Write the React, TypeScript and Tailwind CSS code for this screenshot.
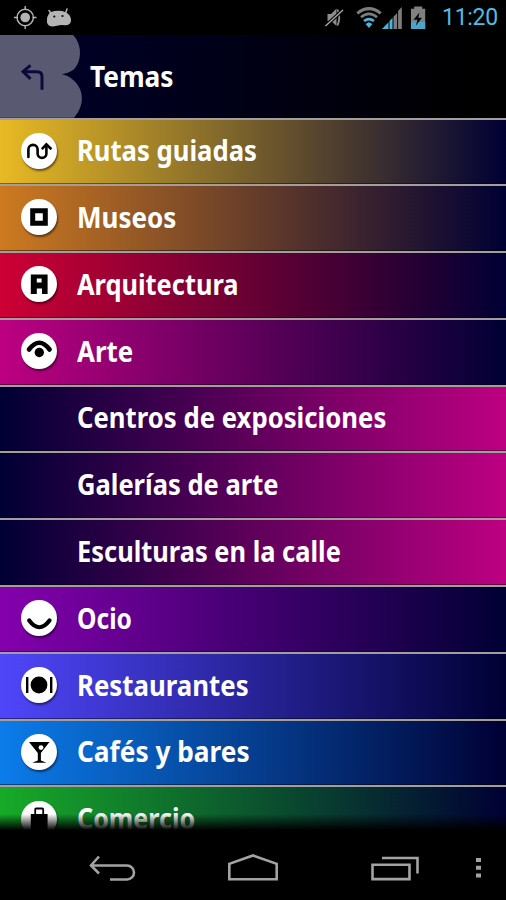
import { useLayoutEffect, useRef, useState } from "react";
import type { ReactNode } from "react";

/* Condenses a label horizontally so that it occupies the given width. */
function Label({ text, width }: { text: string; width: number }) {
  const ref = useRef<HTMLSpanElement>(null);
  const [scale, setScale] = useState(1);
  useLayoutEffect(() => {
    if (ref.current) setScale((width + 1.5) / ref.current.offsetWidth);
  }, [width]);
  return (
    <span
      ref={ref}
      className="block origin-left whitespace-nowrap text-[28px] leading-9 font-bold text-white"
      style={{ transform: `scaleX(${scale})` }}
    >
      {text}
    </span>
  );
}

const icons: Record<string, ReactNode> = {
  route: (
    <g fill="none" stroke="#000" strokeWidth="2.6">
      <path d="M7.4 24V16.5a4.6 4.6 0 0 1 9.2 0v4a4.4 4.4 0 0 0 8.8 0V12.2" strokeLinecap="round" />
      <path d="m20.8 16.2 4.6-4.8 5 4.8" />
    </g>
  ),
  museum: <path d="M11.7 11.7h12.6v12.6H11.7z" fill="none" stroke="#000" strokeWidth="5" />,
  architecture: (
    <path fillRule="evenodd" d="M9.800 8.500h16.800v19.500h-5.600V22.500h-5.200V28H9.800zM15.800 12.600v4h4.800v-4z" />
  ),
  art: (
    <>
      <path d="M8 16.500Q18.300 3 28.600 16.500" fill="none" stroke="#000" strokeWidth="4.600" strokeLinecap="round" />
      <circle cx="18.300" cy="19.500" r="4.700" />
    </>
  ),
  smile: <path d="M8.200 20.500Q18.300 34 28.500 20.500" fill="none" stroke="#000" strokeWidth="4.200" strokeLinecap="round" />,
  plate: (
    <>
      <circle cx="18" cy="18" r="8.400" />
      <path d="M5 10h2.400v16H5zM29 10h2.400v16H29z" />
    </>
  ),
  glass: (
    <>
      <path d="M8 8h20.500l-8.600 11v7.500l5.600 2.200H11.200l5.600-2.200V19z" />
      <circle cx="20" cy="13.600" r="2.400" fill="#fff" />
    </>
  ),
  bag: (
    <>
      <path d="M9.800 13h16.800v20H9.800z" />
      <path d="M14.200 14V8.500q0-1 1-1h6q1 0 1 1V14" fill="none" stroke="#000" strokeWidth="1.800" />
    </>
  ),
};

type Row = { label: string; width: number; bg: string; icon?: string };

const rows: Row[] = [
  { label: "Rutas guiadas", width: 178, icon: "route", bg: "from-[#e8ba24] to-[#000034]" },
  { label: "Museos", width: 98, icon: "museum", bg: "from-[#cd7a20] to-[#000034]" },
  { label: "Arquitectura", width: 160, icon: "architecture", bg: "from-[#cd0034] to-[#000034]" },
  { label: "Arte", width: 55, icon: "art", bg: "from-[#bd0082] to-[#000034]" },
  { label: "Centros de exposiciones", width: 308, bg: "from-[#000034] to-[#bd0082]" },
  { label: "Galerías de arte", width: 200, bg: "from-[#000034] to-[#bd0082]" },
  { label: "Esculturas en la calle", width: 262, bg: "from-[#000034] to-[#bd0082]" },
  { label: "Ocio", width: 53, icon: "smile", bg: "from-[#8400ad] to-[#000034]" },
  { label: "Restaurantes", width: 170, icon: "plate", bg: "from-[#4f46fa] to-[#000034]" },
  { label: "Cafés y bares", width: 171, icon: "glass", bg: "from-[#0b7cea] to-[#000034]" },
  { label: "Comercio", width: 117, icon: "bag", bg: "from-[#17aa28] to-[#000034]" },
];

function StatusBar() {
  return (
    <div className="flex h-[35px] shrink-0 items-center bg-black">
      <svg className="h-[35px] w-[430px] shrink-0" viewBox="0 0 430 35">
        <g stroke="#b4b4b4" fill="none" strokeWidth="1.400">
          <circle cx="25.200" cy="17.500" r="8.200" />
          <path d="M25.200 6v4M25.200 25v4M14 17.500h4M32.500 17.500h4" />
        </g>
        <circle cx="25.200" cy="17.500" r="4.800" fill="#b4b4b4" />
        <path
          d="M50.200 12.200Q59 9.500 65.500 12.200 71 14.500 71 20.500 70.500 25.500 65 25.300 61 24.500 57 25.700 48.500 28 47 22.500 46.300 16 50.200 12.200z"
          fill="#b4b4b4"
        />
        <path d="m49 10.500 2.500 3.500M67 9l-1.500 4.500" stroke="#b4b4b4" strokeWidth="1.500" strokeLinecap="round" />
        <circle cx="54.300" cy="16.500" r="1.100" />
        <circle cx="62.500" cy="16" r="1.100" />
        <g fill="#8c8c8c">
          <path d="M327.500 14h3.500l5.500-5.500v17.500l-5-4.700h-4z" />
          <path d="M337.500 9.500q3.500 8 0 16" fill="none" stroke="#8c8c8c" strokeWidth="1.800" />
          <path d="m325.500 26 17.500-16" stroke="#000" strokeWidth="3.500" />
          <path d="m325.500 26 17.500-16" stroke="#a8a8a8" strokeWidth="1.400" />
        </g>
        <g fill="none" stroke="#7d7d7d">
          <path d="M357.300 13.300Q369 4 380.700 13.300" strokeWidth="3" />
          <path d="M361 17.300Q369 10.500 377 17.300" strokeWidth="2.600" />
          <path d="M364 21Q369 17.300 374 21" stroke="#4eb3d8" strokeWidth="2.600" />
        </g>
        <path d="m365.500 24 3.500-1.800 3.500 1.800-3.500 4z" fill="#4eb3d8" />
        <path d="M382 29 388.500 22.200V29z" fill="#4eb3d8" />
        <path d="M389.500 29v-8l3-3.200V29z" fill="#4eb3d8" />
        <path d="M393.500 29V16.800l3.600-3.800v16zM398.100 29V11l3.700-4v22z" fill="#7d7d7d" />
        <path d="M411 8.800h3.200V6.500h8v2.300h3V29H411z" fill="#808080" />
        <path d="M411 22h14.200v7H411z" fill="#4ba6ca" />
        <path d="m419.500 12.500-6 7.200h4l-1.700 6 6.200-8h-3.700z" />
      </svg>
      <span className="ml-[12px] font-['Roboto',sans-serif] text-[23px] leading-none tracking-[-0.300px] text-[#4fbde5]">
        11:20
      </span>
    </div>
  );
}

function NavBar() {
  return (
    <div className="h-[68px] shrink-0 bg-black">
      <svg className="block h-[68px] w-full" viewBox="0 832 506 68" fill="none" stroke="#a3a3a3" strokeWidth="2.600">
        <path d="M99 856.500 91 865.500 99 873.500M91 865.500H127a7 7 0 0 1 0 14H110" />
        <path d="M229.300 879.200V863.800L253 855.500l23.700 8.300v15.400z" />
        <path d="M372.500 864.800h37v14.300h-37zM382 858h35.500v15.500" />
        <path d="M476 858h5v4h-5zM476 865.700h5v4h-5zM476 873.500h5v4h-5z" fill="#a3a3a3" stroke="none" />
      </svg>
    </div>
  );
}

export default function App() {
  return (
    <div className="flex h-[900px] w-[506px] flex-col overflow-hidden bg-black font-['Noto_Sans',sans-serif]">
      <StatusBar />
      <header className="flex h-[82.500px] shrink-0 items-center bg-linear-to-r/srgb from-[#00002c] to-black to-95%">
        <svg className="h-full w-[90px] shrink-0" viewBox="0 0 90 82.800" preserveAspectRatio="none">
          <path d="M0 0H73C83 10 82 29 72 36Q68 38.500 62 39.500 69 41 74 46C84 55 85 71 74 83H0z" fill="#5a5972" />
          <path
            d="M30.500 30.500 23 36.800 30.500 44M23 36.800h14q5 0 5 5V55"
            fill="none"
            stroke="#0c0a3a"
            strokeWidth="3"
          />
        </svg>
        <Label text="Temas" width={82} />
      </header>
      <main className="relative min-h-0 flex-1 overflow-hidden">
        {rows.map((row) => (
          <div
            key={row.label}
            className={`flex h-[66.800px] items-center border-t-2 border-b border-t-[#a39d9b] border-b-black/45 bg-linear-to-r/srgb pb-[2.500px] ${row.bg}`}
          >
            <div className="flex w-[77px] shrink-0 pt-px pl-[20.500px]">
              {row.icon && (
                <svg
                  className="h-9 w-9 rounded-full bg-white shadow-[1px_2px_2px_rgba(0,0,0,0.5)]"
                  viewBox="0 0 36 36"
                >
                  {icons[row.icon]}
                </svg>
              )}
            </div>
            <Label text={row.label} width={row.width} />
          </div>
        ))}
        <div className="absolute inset-x-0 bottom-0 h-[18px] bg-linear-to-b from-transparent to-black to-90%" />
      </main>
      <NavBar />
    </div>
  );
}
